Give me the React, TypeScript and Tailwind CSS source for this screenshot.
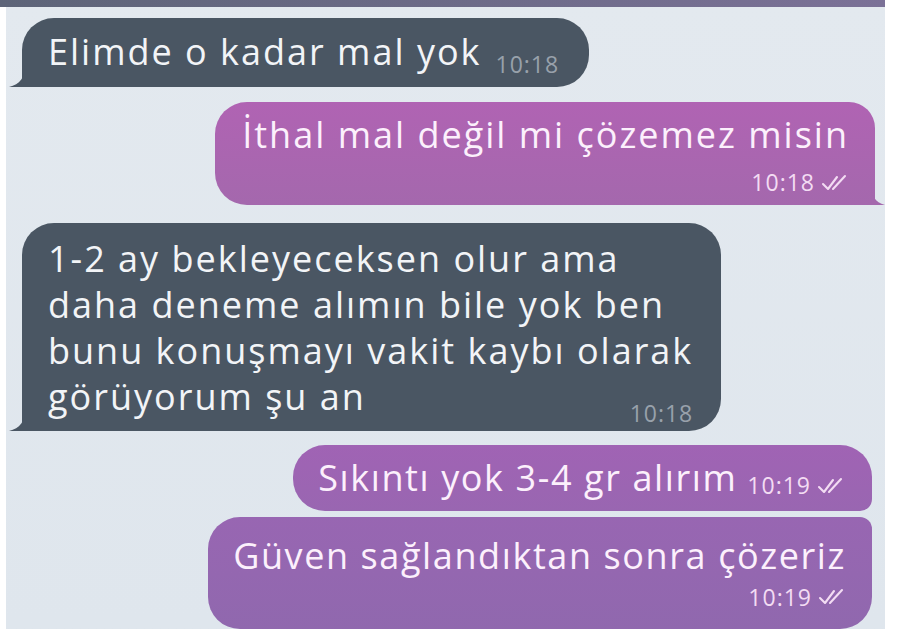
import React from 'react';

const DARK = '#4a5663';

const Checks = () => (
  <svg width="28" height="18" viewBox="0 0 28 18" fill="none" className="inline-block ml-[6px]">
    <path d="M2 10 L7 15 L16 3" stroke="#f3dcf3" strokeWidth="2.1" strokeLinecap="round" strokeLinejoin="round" />
    <path d="M12 15 L24 2" stroke="#f3dcf3" strokeWidth="2.1" strokeLinecap="round" />
  </svg>
);

const TailLeft = ({ color }: { color: string }) => (
  <svg width="16" height="22" viewBox="0 0 16 22" className="absolute left-[-13px] bottom-0">
    <path d="M16 0 C16 13 11 19 0 22 L16 22 Z" fill={color} />
  </svg>
);

const TailRight = ({ color }: { color: string }) => (
  <svg width="14" height="22" viewBox="0 0 14 22" className="absolute right-[-10px] bottom-0">
    <path d="M0 0 C0 13 4 19 14 22 L0 22 Z" fill={color} />
  </svg>
);

const DarkTime = ({ t }: { t: string }) => (
  <span className="text-[23px] leading-none text-[#98a1ab] tracking-[1px]">{t}</span>
);

const PurpleTime = ({ t }: { t: string }) => (
  <span className="flex items-center text-[23px] leading-none text-[#f3dcf3] tracking-[1px]">
    {t}
    <Checks />
  </span>
);

export default function App() {
  return (
    <div className="w-[897px] h-[644px] bg-white overflow-hidden font-['Open_Sans',sans-serif]">
      <div className="h-[7px] w-[885px] bg-gradient-to-r from-[#5d6478] to-[#7b7197]" />
      <div className="ml-[6px] w-[879px] h-[622px] bg-gradient-to-b from-[#e3e9ef] to-[#dfe6ed] overflow-hidden flex flex-col">
        {/* incoming */}
        <div className="relative self-start mt-[11px] ml-[16px] rounded-[32px] rounded-bl-none bg-[#4a5663] pl-[26px] pr-[30px] h-[74px] flex items-center">
          <span className="text-[36px] leading-none text-[#f2f4f7] tracking-[2px]">Elimde o kadar mal yok</span>
          <span className="ml-[14px] leading-none translate-y-[12px]">
            <DarkTime t="10:18" />
          </span>
          <TailLeft color={DARK} />
        </div>

        {/* outgoing */}
        <div className="relative self-end mt-[15px] mr-[10px] rounded-[32px] rounded-tr-[26px] rounded-br-none bg-gradient-to-b from-[#b063b3] to-[#a468ad] pl-[27px] pr-[26px] pt-[8px] pb-[10px] flex flex-col">
          <span className="text-[36px] leading-[50px] text-[#fcf0fc] tracking-[2px]">İthal mal değil mi çözemez misin</span>
          <div className="flex justify-end mt-[11px] h-[24px]">
            <PurpleTime t="10:18" />
          </div>
          <TailRight color="#a468ad" />
        </div>

        <div className="relative self-start mt-[18px] ml-[16px] rounded-[32px] rounded-bl-none bg-[#4a5663] pl-[26px] pr-[28px] pt-[13px] pb-[11px] flex flex-col text-[36px] leading-[46px] text-[#f2f4f7] tracking-[2px]">
          <span>1-2 ay bekleyeceksen olur ama</span>
          <span>daha deneme alımın bile yok ben</span>
          <span>bunu konuşmayı vakit kaybı olarak</span>
          <div className="flex justify-between items-center h-[46px]">
            <span>görüyorum şu an</span>
            <span className="leading-none translate-y-[12px]">
              <DarkTime t="10:18" />
            </span>
          </div>
          <TailLeft color={DARK} />
        </div>

        <div className="self-end mt-[14px] mr-[13px] rounded-[32px] rounded-br-[12px] bg-gradient-to-b from-[#a063b4] to-[#9966b1] pl-[25px] pr-[27px] h-[71px] flex items-center">
          <span className="text-[36px] leading-none text-[#fcf0fc] tracking-[1.6px]">Sıkıntı yok 3-4 gr alırım</span>
          <span className="ml-[10px] translate-y-[8px]">
            <PurpleTime t="10:19" />
          </span>
        </div>

        <div className="self-end mt-[6px] mr-[13px] rounded-[32px] rounded-tr-[12px] bg-gradient-to-b from-[#9866b2] to-[#9068ae] pl-[25px] pr-[26px] pt-[14px] pb-[20px] flex flex-col">
          <span className="text-[36px] leading-[50px] text-[#fcf0fc] tracking-[1.6px]">Güven sağlandıktan sonra çözeriz</span>
          <div className="flex justify-end mt-[4px] h-[24px]">
            <PurpleTime t="10:19" />
          </div>
        </div>
      </div>
    </div>
  );
}
